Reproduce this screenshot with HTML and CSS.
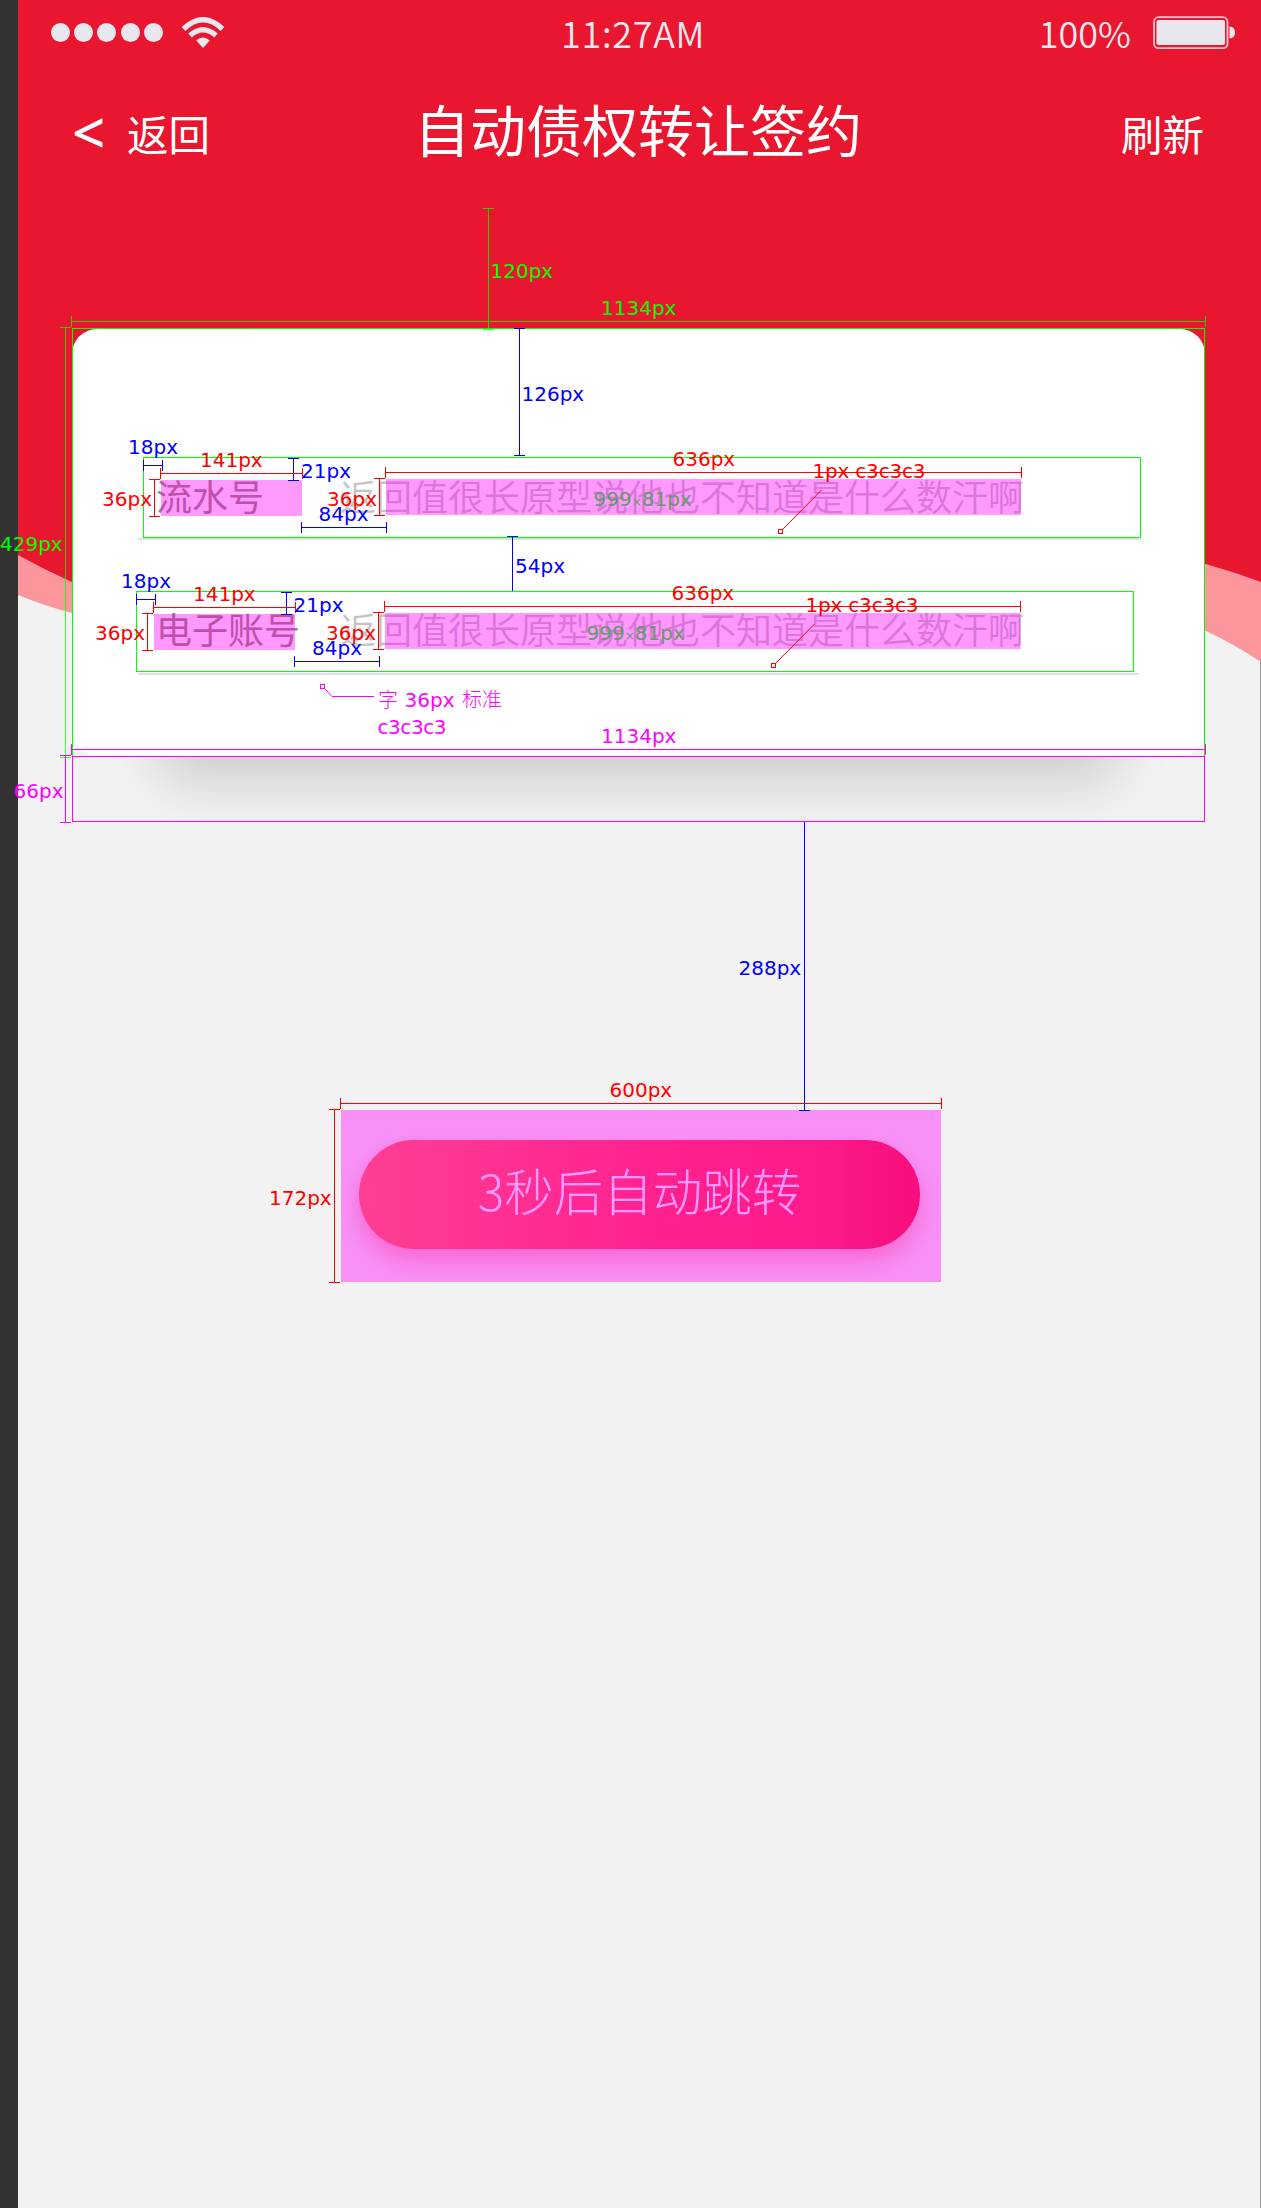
FILE: index.html
```html
<!DOCTYPE html>
<html lang="zh-CN">
<head>
<meta charset="utf-8">
<title>自动债权转让签约</title>
<link rel="stylesheet" href="styles.css">
</head>
<body>
<div class="board">
  <div class="gutter"></div>
  <main class="screen">
    <svg class="wave" width="1243" height="700" viewBox="18 0 1243 700" aria-hidden="true">
      <path fill="#fb979c" d="M18 400V595Q45 606 72 613Q640 760 1206 631Q1234 644 1261 662V400Z"/>
      <path fill="#e9162f" d="M18 0V555Q45 570 72 582Q640 420 1206 564Q1234 572 1261 582V0Z"/>
    </svg>
    <div class="status">
      <div class="signal">
        <i class="dot"></i><i class="dot"></i><i class="dot"></i><i class="dot"></i><i class="dot"></i>
        <svg class="wifi" width="44" height="31" viewBox="0 0 44 31">
          <g fill="none" stroke="#e9e7ee">
            <path stroke-width="5.400" d="M2.500 12Q22 -6.500 41.500 12"/>
            <path stroke-width="5.200" d="M9 18.500Q22 7 35 18.500"/>
          </g>
          <path fill="#e9e7ee" d="M15.200 23.500Q22 17.500 28.800 23.500L22 31Z"/>
        </svg>
      </div>
      <div class="clock">11:27AM</div>
      <div class="power">
        <span>100%</span>
        <svg class="battery" width="82" height="34" viewBox="0 0 82 34">
          <rect x="1" y="1.200" width="73.500" height="31" rx="4.500" fill="none" stroke="#f6c3cb" stroke-width="1.800"/>
          <rect x="3.500" y="4" width="68.500" height="25" rx="2" fill="#e9e7ee"/>
          <path d="M76.500 10.500Q82 11 82 16.500Q82 22 76.500 22.500Z" fill="#e9e7ee"/>
        </svg>
      </div>
    </div>
    <header class="nav">
      <div class="back"><span class="chev">&lt;</span><span>返回</span></div>
      <h1>自动债权转让签约</h1>
      <div class="refresh">刷新</div>
    </header>
    <section class="card">
      <div class="field"><span class="label">流水号</span><span class="value">返回值很长原型说他也不知道是什么数汗啊</span></div>
      <div class="field second"><span class="label">电子账号</span><span class="value">返回值很长原型说他也不知道是什么数汗啊</span></div>
    </section>
    <button class="jump">3秒后自动跳转</button>
  </main>

  <svg class="specs" width="1261" height="2208" viewBox="0 0 1261 2208">
    <g class="area">
      <rect x="161" y="480" width="141" height="36"/>
      <rect x="386" y="479" width="635" height="36"/>
      <rect x="154" y="614" width="141" height="36"/>
      <rect x="385" y="613" width="635.500" height="36"/>
      <rect x="341" y="1110" width="600" height="172"/>
    </g>
    <g class="line green soft">
      <path d="M488.500 208V329M483 208.500H494M483 329.500H494M72 321.500H1205M71.500 316V327M1205.500 316V327"/>
      <path d="M65.500 327V757M60 327.500H71M60 757.500H71"/>
    </g>
    <g class="line green">
      <rect x="72.500" y="328.500" width="1132" height="428"/>
      <rect x="143.500" y="457.500" width="997" height="80"/>
      <rect x="136.500" y="591.500" width="997" height="80"/>
    </g>
    <g class="line blue">
      <path d="M519.500 328V455M514 328.500H525M514 455.500H525"/>
      <path d="M143 465.500H162M143.500 460V471M162.500 460V471"/>
      <path d="M293.500 458V480M288 458.500H299M288 480.500H299"/>
      <path d="M302 527.500H386M301.500 522V533M386.500 522V533"/>
      <path d="M512.500 536V591M507 536.500H518"/>
      <path d="M136 599.500H155M136.500 594V605M155.500 594V605"/>
      <path d="M286.500 592V614M281 592.500H292M281 614.500H292"/>
      <path d="M295 661.500H379M294.500 656V667M379.500 656V667"/>
      <path d="M804.500 821V1110M799 821.500H810M799 1110.500H810"/>
    </g>
    <g class="line red">
      <path d="M161 473.500H302M160.500 468V479M302.500 468V479"/>
      <path d="M154.500 479V516M149 479.500H160M149 516.500H160"/>
      <path d="M379.500 478V515M374 478.500H385M374 515.500H385"/>
      <path d="M386 472.500H1021M385.500 467V478M1021.500 467V478"/>
      <path d="M154 607.500H295M153.500 602V613M295.500 602V613"/>
      <path d="M147.500 613V650M142 613.500H153M142 650.500H153"/>
      <path d="M378.500 612V649M373 612.500H384M373 649.500H384"/>
      <path d="M385 606.500H1021M384.500 601V612M1020.500 601V612"/>
      <path d="M341 1103.500H941M340.500 1098V1109M941.500 1098V1109"/>
      <path d="M334.500 1110V1282M329 1109.500H340M329 1282.500H340"/>
      <path d="M778.500 529.500H782.500V533.500H778.500ZM771.500 663.500H775.500V667.500H771.500Z"/>
      <path class="leader" d="M783 529L821.500 490M776 663L814.500 624"/>
    </g>
    <g class="line magenta">
      <rect x="72.500" y="756.500" width="1132" height="65"/>
      <path d="M72 749.500H1205M71.500 744V755M1205.500 744V755"/>
      <path d="M65.500 755V822M60 755.500H71M60 822.500H71"/>
      <path d="M320.500 684.500H324.500V688.500H320.500ZM332 696.500H374"/>
      <path class="leader" d="M325 689L332 696.500"/>
    </g>
    <g class="tag green">
      <text x="490.500" y="278">120px</text>
      <text x="601" y="315">1134px</text>
      <text x="0" y="551">429px</text>
    </g>
    <g class="tag size">
      <text x="593.500" y="506">999<tspan class="times">×</tspan>81px</text>
      <text x="586.500" y="640">999<tspan class="times">×</tspan>81px</text>
    </g>
    <g class="tag blue">
      <text x="521.500" y="401">126px</text>
      <text x="128" y="454">18px</text>
      <text x="301" y="478">21px</text>
      <text x="318.500" y="521">84px</text>
      <text x="515" y="573">54px</text>
      <text x="121" y="588">18px</text>
      <text x="293.500" y="612">21px</text>
      <text x="312" y="655">84px</text>
      <text x="738.500" y="975">288px</text>
    </g>
    <g class="tag red">
      <text x="200" y="467">141px</text>
      <text x="102" y="506">36px</text>
      <text x="327" y="506">36px</text>
      <text x="672.500" y="466">636px</text>
      <text x="812.500" y="478" textLength="113">1px c3c3c3</text>
      <text x="193" y="601">141px</text>
      <text x="95" y="640">36px</text>
      <text x="326" y="640">36px</text>
      <text x="671.500" y="600">636px</text>
      <text x="805.500" y="612" textLength="113">1px c3c3c3</text>
      <text x="609.500" y="1097">600px</text>
      <text x="269" y="1205">172px</text>
    </g>
    <g class="tag magenta">
      <text class="cjk" x="378" y="707">字</text>
      <text x="404.500" y="707">36px</text>
      <text class="cjk" x="462" y="707">标准</text>
      <text x="377.500" y="734" textLength="69">c3c3c3</text>
      <text x="601" y="743">1134px</text>
      <text x="13.500" y="798">66px</text>
    </g>
  </svg>
</div>
</body>
</html>
```
FILE: styles.css
```css
* { box-sizing: border-box; }
body {
  margin: 0;
  font-family: "Noto Sans CJK SC", "Noto Sans", sans-serif;
}
.board {
  position: relative;
  display: flex;
  width: 1261px;
  height: 2208px;
  overflow: hidden;
}
.gutter { width: 18px; background: #333; }
.screen {
  position: relative;
  isolation: isolate;
  display: flex;
  flex: 1;
  flex-direction: column;
  background: #f2f2f2;
  border-right: 1px solid #999;
}
.wave { position: absolute; left: 0; top: 0; z-index: -1; }

.status {
  display: grid;
  grid-template-columns: 545px 1fr auto;
  align-items: center;
  height: 65px;
  padding: 0 25px 0 33px;
  color: #e9e7ee;
  font-size: 36px;
  font-weight: 350;
  line-height: 63px;
}
.signal { display: flex; align-items: center; gap: 4.2px; }
.dot { width: 19px; height: 19px; border-radius: 50%; background: #e9e7ee; }
.wifi { margin-left: 14px; }
.clock { margin-left: -34px; letter-spacing: .7px; }
.signal + .clock { margin-left: -35px; }
.power { display: flex; align-items: center; justify-content: flex-end; gap: 22px; }

.nav {
  display: grid;
  grid-template-columns: 1fr auto 1fr;
  height: 143px;
  padding: 0 56px 0 54px;
  color: #fff;
  font-size: 41.5px;
  line-height: 136px;
}
.back { display: flex; gap: 21px; }
.chev {
  width: 34px;
  font-family: "Noto Sans", sans-serif;
  font-size: 58px;
  font-weight: 500;
  line-height: 134px;
}
.nav h1 { margin: 0; font-size: 56px; font-weight: 400; line-height: 126px; }
.refresh { text-align: right; }

.card {
  width: 1133px;
  height: 427px;
  margin: 121px 0 0 54px;
  padding: 128px 66px 0;
  border-radius: 25px;
  background: #fff;
  box-shadow: 0 114px 52px -90px rgba(0, 0, 0, .16);
}
.field {
  display: flex;
  height: 83px;
  margin-bottom: 52px;
  padding-left: 18px;
  border-bottom: 2px solid #e0e0e0;
  font-size: 36px;
  line-height: 76px;
}
.field.second { line-height: 73px; }
.label { width: 184px; color: #968570; }
.value { color: #c3c3c3; font-weight: 350; white-space: nowrap; }

.jump {
  width: 561px;
  height: 109px;
  margin: 384px 0 0 341px;
  padding: 0 0 9px;
  border: 0;
  border-radius: 55px;
  background: linear-gradient(90deg, #ff694e, #ff3744 55%, #fd2f3d 80%, #f21727);
  box-shadow: 0 12px 22px rgba(255, 40, 60, .35);
  color: #fff;
  font: 300 49.500px/96px "Noto Sans CJK SC", sans-serif;
}

.specs { position: absolute; left: 0; top: 0; }
.area { fill: #f0f; opacity: .4; }
.line { fill: none; stroke-width: 1; }
.line path, .line rect { shape-rendering: crispEdges; }
.line .leader { shape-rendering: auto; }
.line.soft { opacity: .75; }
.line.green { stroke: #0f0; }
.line.blue { stroke: #00f; }
.line.red { stroke: #f00; }
.line.magenta { stroke: #f0f; }
.tag { font: 400 20px "DejaVu Sans", "Noto Sans CJK SC", sans-serif; }
.tag .cjk { font-family: "Noto Sans CJK SC", sans-serif; font-weight: 300; }
.tag.green { fill: #0f0; }
.tag.blue { fill: #00f; }
.tag.red { fill: #f00; }
.tag.magenta { fill: #f0f; }
.tag.size { fill: #5f9c66; }
.times { font-size: 12px; }
```
